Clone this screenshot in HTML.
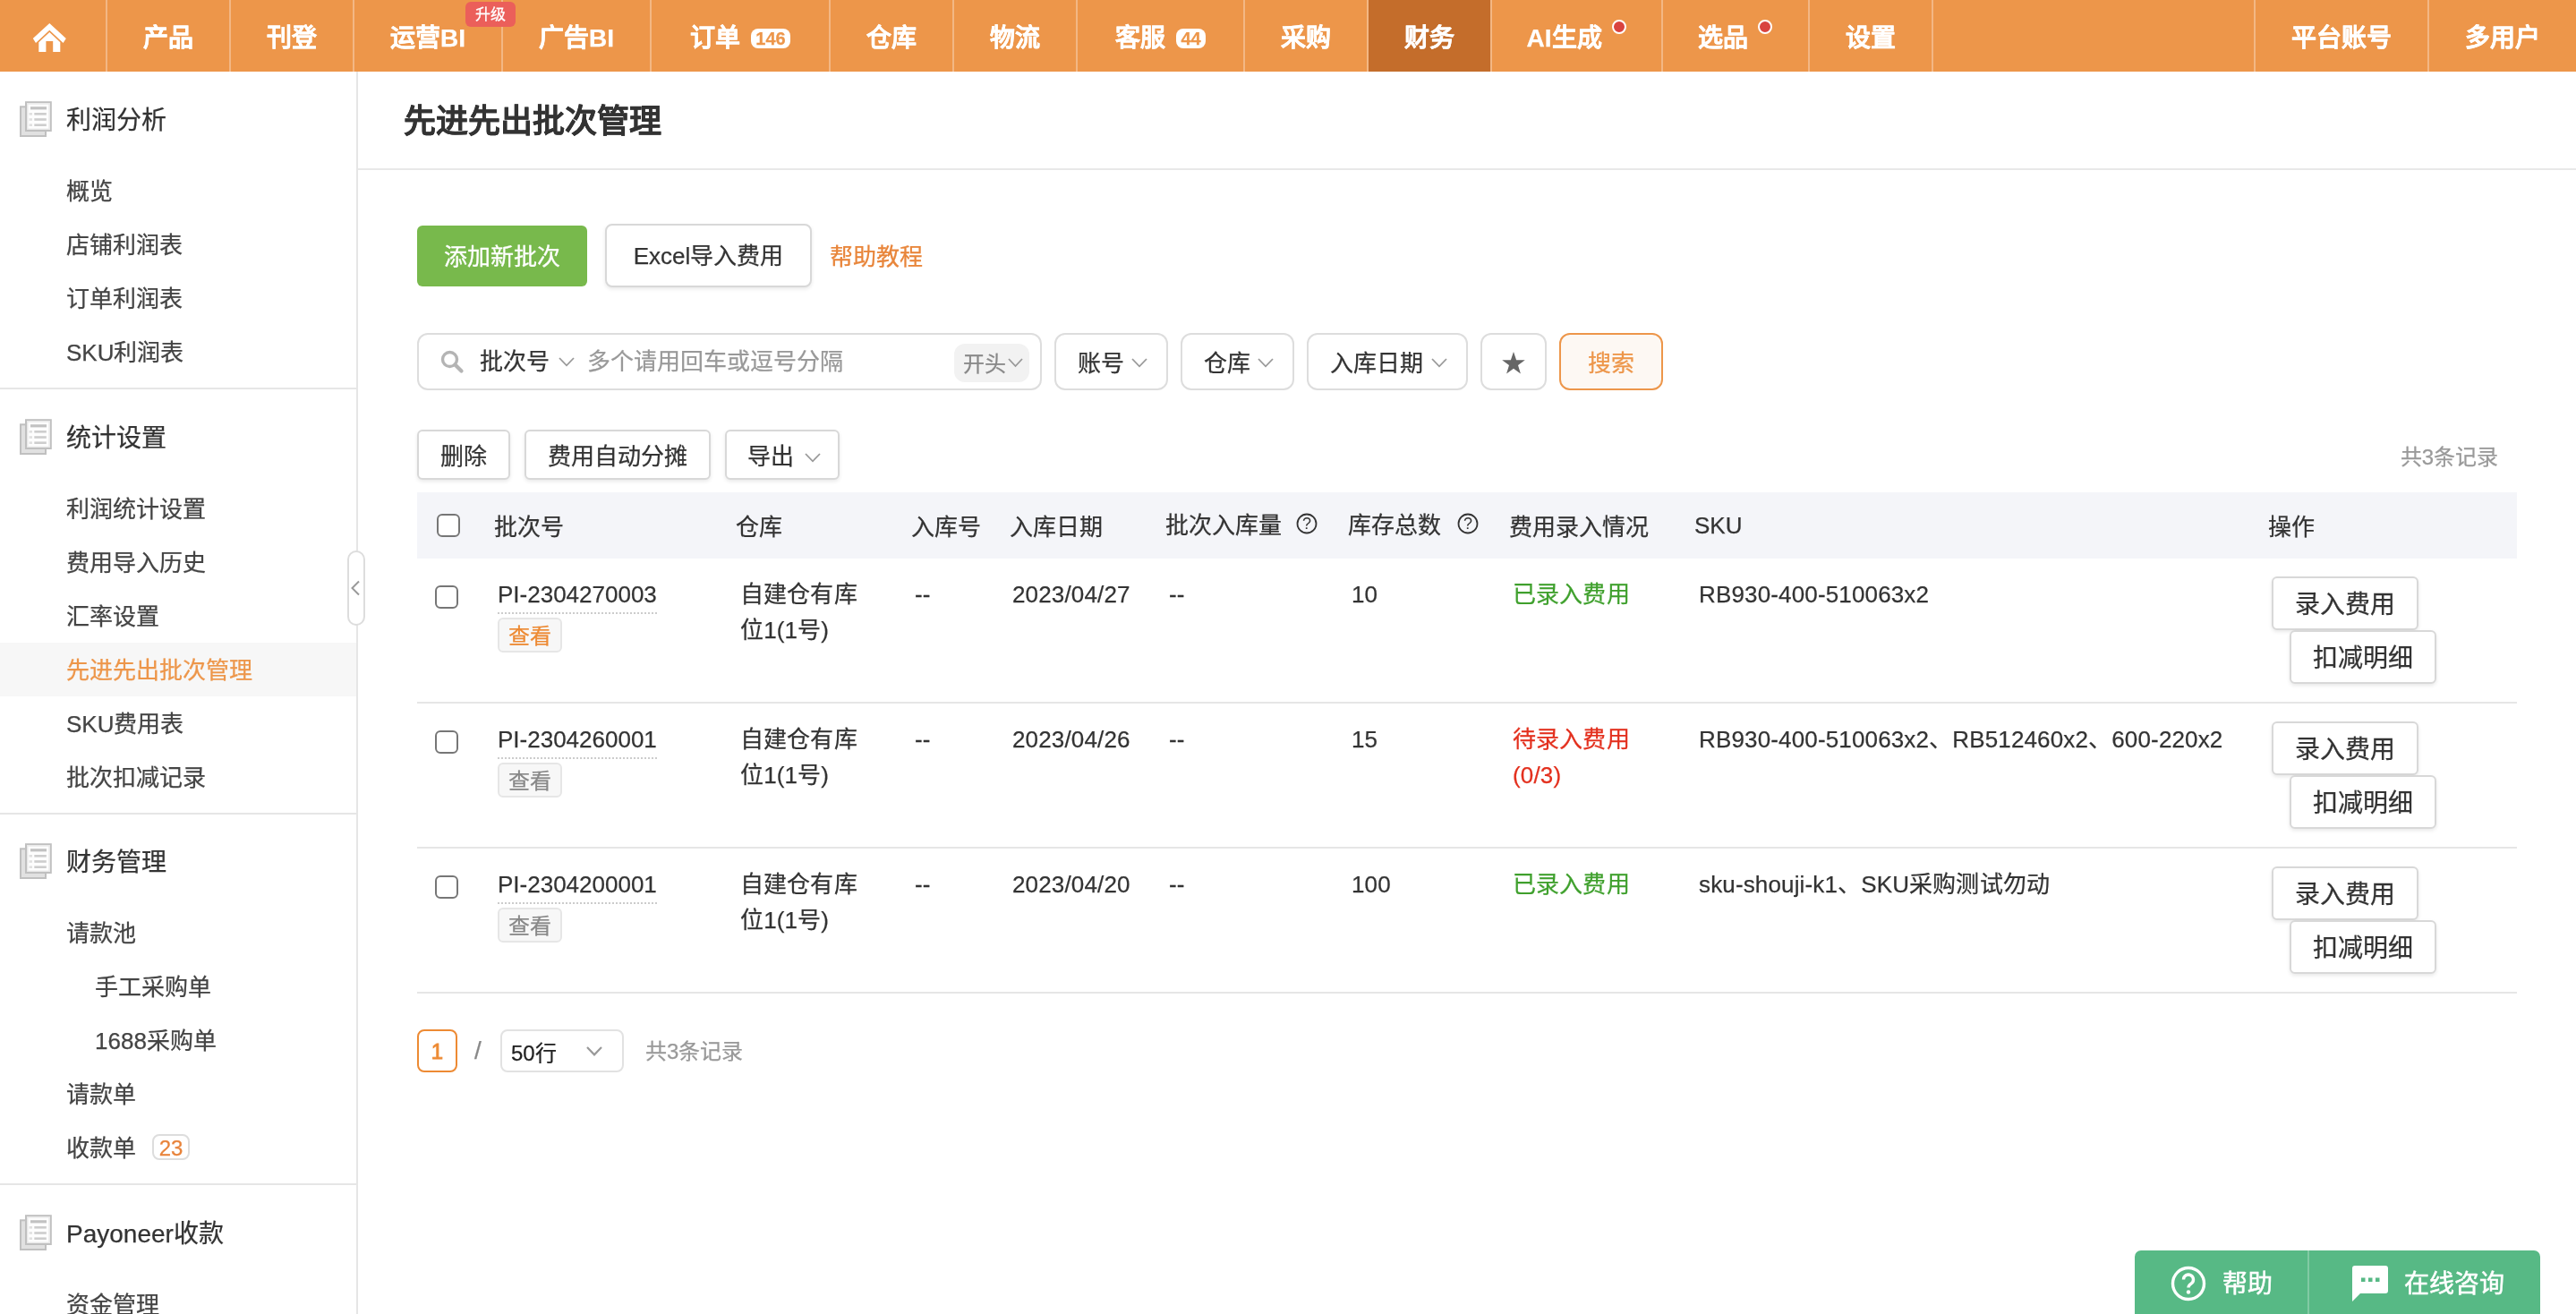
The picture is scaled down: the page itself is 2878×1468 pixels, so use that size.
<!DOCTYPE html>
<html lang="zh-CN">
<head>
<meta charset="utf-8">
<title>先进先出批次管理</title>
<style>
*{box-sizing:border-box;margin:0;padding:0}
html,body{width:2878px;height:1468px;overflow:hidden;background:#fff}
body{font-family:"Liberation Sans",sans-serif;font-size:26px;color:#333;position:relative;-webkit-text-stroke:0.25px}
/* NAV */
#nav,#side,#main,#handle{will-change:transform}
#nav{position:absolute;left:0;top:0;width:2878px;height:80px;background:#ED964A}
#nav .it{position:absolute;top:0;height:80px;line-height:86px;text-align:center;color:#fff;font-weight:bold;font-size:28px;border-right:2px solid rgba(255,255,255,.32);white-space:nowrap}
#nav .it.act{background:#C46D2B;background-clip:padding-box}
#nav .bdg{display:inline-block;vertical-align:top;margin-top:32px;background:#fff;color:#ED964A;font-size:20px;line-height:22px;height:22px;padding:0 5.5px;border-radius:8px;margin-left:12px}
#nav .dot{position:absolute;left:11px;top:22px;width:16px;height:16px;border-radius:50%;background:#D9433F;border:2px solid #fff}
#nav .dw{display:inline-block;width:28px;height:20px;position:relative;vertical-align:top}
#nav .up{position:absolute;left:520px;top:2px;width:56px;height:28px;line-height:29px;background:#EB5F5A;color:#fff;font-size:17px;font-weight:normal;border-radius:6px;text-align:center}
/* SIDEBAR */
#side{position:absolute;left:0;top:80px;width:400px;height:1388px;border-right:2px solid #e6e6e6;background:#fff}
#side .sec{border-bottom:2px solid #e6e6e6;padding-bottom:10px}
#side .hd{height:103px;line-height:110px;padding-left:74px;font-size:28px;color:#333;position:relative}
#side .hd svg{position:absolute;left:22px;top:33px;filter:blur(.45px)}
#side .li{height:60px;line-height:62px;padding-left:74px;font-size:26px;color:#444;white-space:nowrap}
#side .li.sub{padding-left:106px}
#side .li.on{background:#f7f7f7;color:#ED964A}
#side .n23{display:inline-block;vertical-align:middle;margin-left:18px;width:42px;height:29px;line-height:27px;border:2px solid #ddd;border-radius:8px;color:#E8833A;font-size:24px;text-align:center;position:relative;top:-4px}
#handle{position:absolute;left:388px;top:615px;width:20px;height:84px;border:2px solid #ddd;border-radius:10px;background:#fff}
/* MAIN */
#main{position:absolute;left:400px;top:80px;width:2478px;height:1388px}
.abs{position:absolute}
h1{position:absolute;left:51px;top:31px;font-size:36px;line-height:50px;font-weight:bold;color:#333}
#hr{position:absolute;left:0;top:108px;width:2478px;height:2px;background:#e8e8e8}
.btn{position:absolute;border:2px solid #d8d8d8;border-radius:6px;background:#fff;text-align:center;color:#222;white-space:nowrap;box-shadow:0 2px 4px rgba(0,0,0,.09)}
.box{position:absolute;top:292px;height:64px;border:2px solid #ddd;border-radius:12px;background:#fff;line-height:65px;white-space:nowrap;color:#333}

#gbtn{-webkit-text-stroke:0.3px #fff;left:66px;top:172px;width:190px;height:68px;line-height:70px;background:#78B94C;color:#fff;border-radius:6px;text-align:center}
#xbtn{left:276px;top:170px;width:231px;height:71px;line-height:69px;border-radius:8px;color:#333}
#help{left:527px;top:172px;line-height:70px;color:#E8853A}
#sbox{left:66px;width:698px}
#kt{left:598px;top:10px;width:84px;height:43px;line-height:46px;background:#f2f2f2;border-radius:12px;color:#888;font-size:24px;padding-left:10px}
#kt svg{margin-left:2px;position:relative;top:-3px}
#sbtn{left:1342px;width:116px;border-color:#ED964A;background:#FDF8F3;color:#ED964A;text-align:center}
.tb{top:400px;height:56px;line-height:57px;color:#333}
#cnt{right:87px;top:411px;line-height:40px;font-size:24px;color:#999}
#th{position:absolute;left:66px;top:470px;width:2346px;height:74px;background:#F4F5F9;line-height:74px}
#th span,.tr span{position:absolute;top:0;white-space:nowrap}
.cb{position:absolute;width:26px;height:26px;border:2px solid #767676;border-radius:6px;background:#fff}
.tr{position:absolute;left:66px;width:2346px;height:162px;border-bottom:2px solid #e6e6e6;line-height:40px;color:#333}
.tr span{top:20px;letter-spacing:.15px}
.tr u{letter-spacing:0}
.tr u{text-decoration:none;border-bottom:2px dotted #ccc;display:inline-block;line-height:40px;height:42px}
.tr b{font-weight:normal}.g{color:#3FA02D}.r{color:#E3301E}
.vw{position:absolute;left:90px;top:66px;width:72px;height:39px;line-height:38px;border:2px solid #e6e6e6;border-radius:6px;background:#f7f7f7;font-style:normal;font-size:24px;text-align:center;color:#888}
.vw.or{color:#ED8A33}
.ob{width:164px;height:60px;line-height:59px;font-size:28px;color:#333}
#pg1{left:66px;top:1070px;width:45px;height:48px;line-height:46px;border:2px solid #ED8A33;border-radius:8px;text-align:center;color:#ED8A33;font-size:24px;-webkit-text-stroke:0.8px #ED8A33}
#pgs{left:130px;top:1070px;line-height:48px;color:#888;font-size:28px}
#pgsel{left:159px;top:1070px;width:138px;height:48px;line-height:49px;border:2px solid #e2e2e2;border-radius:8px;padding-left:10px;font-size:24px;color:#222}
#pgc{left:321px;top:1071px;line-height:48px;font-size:24px;color:#999}
#hw{left:1985px;top:1317px;width:453px;height:80px;background:#57B985;border-radius:7px 7px 0 0;color:#fff;font-size:28px;line-height:76px;-webkit-text-stroke:0.5px #fff;white-space:nowrap}
</style>
</head>
<body>
<div id="nav">
<div class="it" style="left:0;width:120px"><svg width="37" height="32" viewBox="0 0 37 32" style="position:absolute;left:37px;top:26px"><path d="M18.3 0 L36.8 17 L33.6 22 L18.3 7.8 L3 22 L-0.2 17 Z" fill="#fff"/><path d="M18.3 10 L30.3 21.2 V32 H22.2 V20 H14.4 V32 H6.3 V21.2 Z" fill="#fff"/></svg></div>
<div class="it" style="left:120px;width:138px">产品</div>
<div class="it" style="left:258px;width:138px">刊登</div>
<div class="it" style="left:396px;width:166px">运营BI</div>
<div class="it" style="left:562px;width:166px">广告BI</div>
<div class="it" style="left:728px;width:200px">订单<span class="bdg">146</span></div>
<div class="it" style="left:928px;width:138px">仓库</div>
<div class="it" style="left:1066px;width:138px">物流</div>
<div class="it" style="left:1204px;width:187px">客服<span class="bdg">44</span></div>
<div class="it" style="left:1391px;width:138px">采购</div>
<div class="it act" style="left:1529px;width:138px">财务</div>
<div class="it" style="left:1667px;width:191px">AI生成<span class="dw"><i class="dot"></i></span></div>
<div class="it" style="left:1858px;width:164px">选品<span class="dw"><i class="dot"></i></span></div>
<div class="it" style="left:2022px;width:138px">设置</div>
<div class="up">升级</div>
<div class="it" style="left:2518px;width:196px;border-left:2px solid rgba(255,255,255,.32)">平台账号</div>
<div class="it" style="left:2714px;width:164px;border-right:0">多用户</div>
</div>
<div id="side">
<div class="sec"><div class="hd"><svg width="36" height="40" viewBox="0 0 36 40"><rect x="1" y="6.3" width="28" height="32.7" fill="#e1e1e1" stroke="#c0c0c0" stroke-width="2"/><rect x="7" y="1.2" width="27.8" height="31.8" fill="#fdfdfd" stroke="#c0c0c0" stroke-width="2"/><rect x="8.7" y="2.9" width="24.4" height="28.4" fill="none" stroke="#e8e8e8" stroke-width="1.4"/><rect x="12" y="6.2" width="18" height="3.2" fill="#c2c2c2"/><g fill="#cdcdcd"><rect x="16.3" y="13" width="13.5" height="2.6"/><rect x="16.3" y="19.2" width="13.5" height="2.6"/><rect x="16.3" y="25.4" width="13.5" height="2.6"/></g><g fill="#e0e0e0"><rect x="10.6" y="13" width="3.4" height="2.6"/><rect x="10.6" y="19.2" width="3.4" height="2.6"/><rect x="10.6" y="25.4" width="3.4" height="2.6"/></g></svg>利润分析</div>
<div class="li ">概览</div>
<div class="li ">店铺利润表</div>
<div class="li ">订单利润表</div>
<div class="li ">SKU利润表</div>
</div>
<div class="sec"><div class="hd"><svg width="36" height="40" viewBox="0 0 36 40"><rect x="1" y="6.3" width="28" height="32.7" fill="#e1e1e1" stroke="#c0c0c0" stroke-width="2"/><rect x="7" y="1.2" width="27.8" height="31.8" fill="#fdfdfd" stroke="#c0c0c0" stroke-width="2"/><rect x="8.7" y="2.9" width="24.4" height="28.4" fill="none" stroke="#e8e8e8" stroke-width="1.4"/><rect x="12" y="6.2" width="18" height="3.2" fill="#c2c2c2"/><g fill="#cdcdcd"><rect x="16.3" y="13" width="13.5" height="2.6"/><rect x="16.3" y="19.2" width="13.5" height="2.6"/><rect x="16.3" y="25.4" width="13.5" height="2.6"/></g><g fill="#e0e0e0"><rect x="10.6" y="13" width="3.4" height="2.6"/><rect x="10.6" y="19.2" width="3.4" height="2.6"/><rect x="10.6" y="25.4" width="3.4" height="2.6"/></g></svg>统计设置</div>
<div class="li ">利润统计设置</div>
<div class="li ">费用导入历史</div>
<div class="li ">汇率设置</div>
<div class="li on">先进先出批次管理</div>
<div class="li ">SKU费用表</div>
<div class="li ">批次扣减记录</div>
</div>
<div class="sec"><div class="hd" style="height:102px;top:-1px"><svg width="36" height="40" viewBox="0 0 36 40"><rect x="1" y="6.3" width="28" height="32.7" fill="#e1e1e1" stroke="#c0c0c0" stroke-width="2"/><rect x="7" y="1.2" width="27.8" height="31.8" fill="#fdfdfd" stroke="#c0c0c0" stroke-width="2"/><rect x="8.7" y="2.9" width="24.4" height="28.4" fill="none" stroke="#e8e8e8" stroke-width="1.4"/><rect x="12" y="6.2" width="18" height="3.2" fill="#c2c2c2"/><g fill="#cdcdcd"><rect x="16.3" y="13" width="13.5" height="2.6"/><rect x="16.3" y="19.2" width="13.5" height="2.6"/><rect x="16.3" y="25.4" width="13.5" height="2.6"/></g><g fill="#e0e0e0"><rect x="10.6" y="13" width="3.4" height="2.6"/><rect x="10.6" y="19.2" width="3.4" height="2.6"/><rect x="10.6" y="25.4" width="3.4" height="2.6"/></g></svg>财务管理</div>
<div class="li ">请款池</div>
<div class="li sub">手工采购单</div>
<div class="li sub">1688采购单</div>
<div class="li ">请款单</div>
<div class="li ">收款单<span class="n23">23</span></div>
</div>
<div class="sec"><div class="hd"><svg width="36" height="40" viewBox="0 0 36 40"><rect x="1" y="6.3" width="28" height="32.7" fill="#e1e1e1" stroke="#c0c0c0" stroke-width="2"/><rect x="7" y="1.2" width="27.8" height="31.8" fill="#fdfdfd" stroke="#c0c0c0" stroke-width="2"/><rect x="8.7" y="2.9" width="24.4" height="28.4" fill="none" stroke="#e8e8e8" stroke-width="1.4"/><rect x="12" y="6.2" width="18" height="3.2" fill="#c2c2c2"/><g fill="#cdcdcd"><rect x="16.3" y="13" width="13.5" height="2.6"/><rect x="16.3" y="19.2" width="13.5" height="2.6"/><rect x="16.3" y="25.4" width="13.5" height="2.6"/></g><g fill="#e0e0e0"><rect x="10.6" y="13" width="3.4" height="2.6"/><rect x="10.6" y="19.2" width="3.4" height="2.6"/><rect x="10.6" y="25.4" width="3.4" height="2.6"/></g></svg>Payoneer收款</div>
<div class="li ">资金管理</div>
</div>
</div>
<div id="handle"><svg width="16" height="80" viewBox="0 0 16 80" style="display:block"><path d="M11 32.5 L3.5 40 L11 47.5" fill="none" stroke="#999" stroke-width="2"/></svg></div>
<div id="main">
<h1>先进先出批次管理</h1><div id="hr"></div>
<div class="abs" id="gbtn">添加新批次</div>
<div class="btn" id="xbtn">Excel导入费用</div>
<div class="abs" id="help">帮助教程</div>
<div class="box" id="sbox"><svg class="abs" style="left:22px;top:15px" width="30" height="30" viewBox="0 0 30 30"><circle cx="12.5" cy="12.5" r="8" fill="none" stroke="#b4b4b4" stroke-width="3.4"/><path d="M18.5 18.5 L25.5 25.5" stroke="#b4b4b4" stroke-width="4.2" stroke-linecap="round"/></svg><span class="abs" style="left:68px;top:-2px">批次号</span><span class="abs" style="left:156px;top:-4px"><svg width="18" height="11" viewBox="0 0 18 11" style="display:inline-block;vertical-align:middle"><path d="M1 1 L9 9.3 L17 1" fill="none" stroke="#999" stroke-width="1.8"/></svg></span><span class="abs" style="left:188px;top:-2px;color:#999">多个请用回车或逗号分隔</span><span class="abs" id="kt">开头<svg width="17" height="11" viewBox="0 0 17 11" style="display:inline-block;vertical-align:middle"><path d="M1 1 L8.5 9 L16 1" fill="none" stroke="#999" stroke-width="1.8"/></svg></span></div>
<div class="box" style="left:778px;width:127px"><span class="abs" style="left:24px;top:0">账号</span><span class="abs" style="left:84px;top:-3px"><svg width="18" height="11" viewBox="0 0 18 11" style="display:inline-block;vertical-align:middle"><path d="M1 1 L9 9.3 L17 1" fill="none" stroke="#999" stroke-width="1.8"/></svg></span></div>
<div class="box" style="left:919px;width:127px"><span class="abs" style="left:24px;top:0">仓库</span><span class="abs" style="left:84px;top:-3px"><svg width="18" height="11" viewBox="0 0 18 11" style="display:inline-block;vertical-align:middle"><path d="M1 1 L9 9.3 L17 1" fill="none" stroke="#999" stroke-width="1.8"/></svg></span></div>
<div class="box" style="left:1060px;width:180px"><span class="abs" style="left:24px;top:0">入库日期</span><span class="abs" style="left:137px;top:-3px"><svg width="18" height="11" viewBox="0 0 18 11" style="display:inline-block;vertical-align:middle"><path d="M1 1 L9 9.3 L17 1" fill="none" stroke="#999" stroke-width="1.8"/></svg></span></div>
<div class="box" style="left:1254px;width:74px"><svg class="abs" style="left:22px;top:19px" width="26" height="25" viewBox="0 0 26 25"><path d="M13 0 L16.1 9.2 L25.8 9.3 L18 15.1 L20.9 24.4 L13 18.8 L5.1 24.4 L8 15.1 L0.2 9.3 L9.9 9.2 Z" fill="#666"/></svg></div>
<div class="box" id="sbtn">搜索</div>
<div class="btn tb" style="left:66px;width:104px">删除</div>
<div class="btn tb" style="left:186px;width:208px">费用自动分摊</div>
<div class="btn tb" style="left:410px;width:128px;text-align:left;padding-left:23px">导出<span style="margin-left:12px;position:relative;top:-1px"><svg width="18" height="11" viewBox="0 0 18 11" style="display:inline-block;vertical-align:middle"><path d="M1 1 L9 9.3 L17 1" fill="none" stroke="#999" stroke-width="1.8"/></svg></span></div>
<div class="abs" id="cnt">共3条记录</div>
<div id="th"><i class="cb" style="left:22px;top:24px"></i><span style="left:86px;top:2px">批次号</span><span style="left:356px;top:2px">仓库</span><span style="left:552px;top:2px">入库号</span><span style="left:662px;top:2px">入库日期</span><span style="left:836px;top:0">批次入库量</span><span style="left:1040px;top:0">库存总数</span><span style="left:1220px;top:2px">费用录入情况</span><span style="left:1427px">SKU</span><span style="left:2068px;top:2px">操作</span><svg width="24" height="24" viewBox="0 0 24 24" style="position:absolute;top:23px;left:982px"><circle cx="12" cy="12" r="10.5" fill="none" stroke="#333" stroke-width="1.8"/><text x="12" y="18.3" font-size="18" text-anchor="middle" fill="#333" font-family="Liberation Sans">?</text></svg><svg width="24" height="24" viewBox="0 0 24 24" style="position:absolute;top:23px;left:1162px"><circle cx="12" cy="12" r="10.5" fill="none" stroke="#333" stroke-width="1.8"/><text x="12" y="18.3" font-size="18" text-anchor="middle" fill="#333" font-family="Liberation Sans">?</text></svg></div>
<div class="tr" style="top:544px"><i class="cb" style="left:20px;top:30px"></i><span style="left:90px"><u>PI-2304270003</u></span><em class="vw or">查看</em><span style="left:361px">自建仓有库<br>位1(1号)</span><span style="left:556px">--</span><span style="left:665px">2023/04/27</span><span style="left:840px">--</span><span style="left:1044px">10</span><span style="left:1224px"><b class="g">已录入费用</b></span><span style="left:1432px">RB930-400-510063x2</span><div class="btn ob" style="left:2072px;top:20px">录入费用</div><div class="btn ob" style="left:2092px;top:80px">扣减明细</div></div>
<div class="tr" style="top:706px"><i class="cb" style="left:20px;top:30px"></i><span style="left:90px"><u>PI-2304260001</u></span><em class="vw ">查看</em><span style="left:361px">自建仓有库<br>位1(1号)</span><span style="left:556px">--</span><span style="left:665px">2023/04/26</span><span style="left:840px">--</span><span style="left:1044px">15</span><span style="left:1224px"><b class="r">待录入费用<br>(0/3)</b></span><span style="left:1432px">RB930-400-510063x2、RB512460x2、600-220x2</span><div class="btn ob" style="left:2072px;top:20px">录入费用</div><div class="btn ob" style="left:2092px;top:80px">扣减明细</div></div>
<div class="tr" style="top:868px"><i class="cb" style="left:20px;top:30px"></i><span style="left:90px"><u>PI-2304200001</u></span><em class="vw ">查看</em><span style="left:361px">自建仓有库<br>位1(1号)</span><span style="left:556px">--</span><span style="left:665px">2023/04/20</span><span style="left:840px">--</span><span style="left:1044px">100</span><span style="left:1224px"><b class="g">已录入费用</b></span><span style="left:1432px">sku-shouji-k1、SKU采购测试勿动</span><div class="btn ob" style="left:2072px;top:20px">录入费用</div><div class="btn ob" style="left:2092px;top:80px">扣减明细</div></div>
<div class="abs" id="pg1">1</div><div class="abs" id="pgs">/</div><div class="abs" id="pgsel">50行<span class="abs" style="right:22px;top:-4px"><svg width="18" height="11" viewBox="0 0 18 11" style="display:inline-block;vertical-align:middle"><path d="M1 1 L9 9.3 L17 1" fill="none" stroke="#999" stroke-width="2.2"/></svg></span></div><div class="abs" id="pgc">共3条记录</div>
<div class="abs" id="hw"><svg class="abs" style="left:40px;top:17px" width="40" height="40" viewBox="0 0 40 40"><circle cx="20" cy="20" r="17.5" fill="none" stroke="#fff" stroke-width="3.4"/><path d="M14.5 15.5 a5.5 5.5 0 1 1 8.5 4.6 c-2 1.3 -3 2.2 -3 4.4" fill="none" stroke="#fff" stroke-width="3.4"/><circle cx="20" cy="29.5" r="2.2" fill="#fff"/></svg><span class="abs" style="left:98px;top:0">帮助</span><i class="abs" style="left:193px;top:0;width:2px;height:71px;background:rgba(255,255,255,.25)"></i><svg class="abs" style="left:243px;top:17px" width="40" height="40" viewBox="0 0 40 40"><path d="M3 0 H37 a3 3 0 0 1 3 3 V28 a3 3 0 0 1 -3 3 H9 L0 40 V3 a3 3 0 0 1 3 -3 Z" fill="#fff"/><g fill="#57B985"><rect x="10" y="13.5" width="4.5" height="4.5"/><rect x="18" y="13.5" width="4.5" height="4.5"/><rect x="26" y="13.5" width="4.5" height="4.5"/></g></svg><span class="abs" style="left:301px;top:0">在线咨询</span></div>
</div>
</body>
</html>
